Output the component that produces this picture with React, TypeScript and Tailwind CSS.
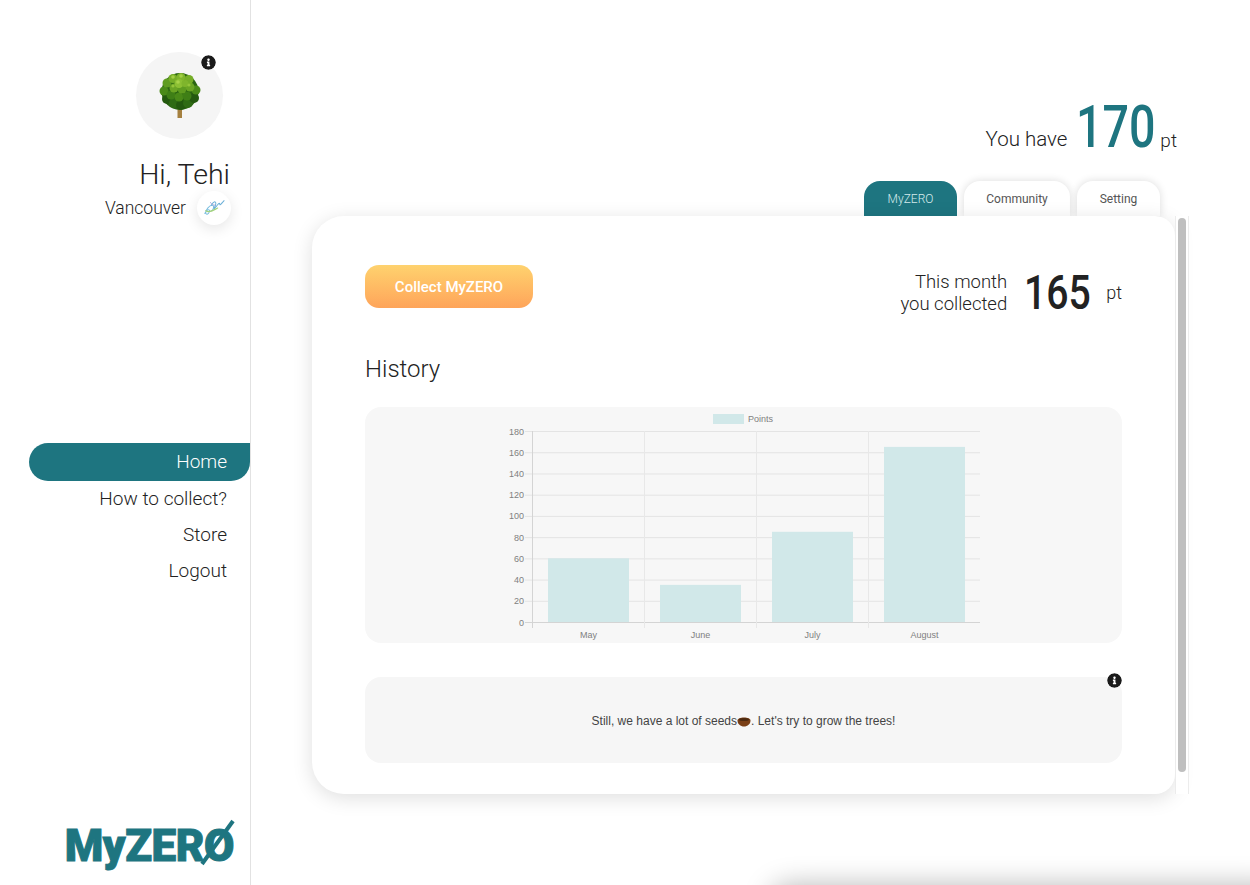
import { FaInfoCircle } from 'react-icons/fa'

const TEAL = '#1e7580'

const yTicks = [0, 20, 40, 60, 80, 100, 120, 140, 160, 180]
const months = [
  { label: 'May', value: 60, x: 183 },
  { label: 'June', value: 35, x: 295 },
  { label: 'July', value: 85, x: 407 },
  { label: 'August', value: 165, x: 519 },
]

// crown clumps of the tree, back to front: [cx, cy, r, colour]
const clumps: [number, number, number, string][] = [
  [21, 18.5, 18.5, '#2a6411'],
  [8, 26, 5, '#24590f'], [15, 30, 5, '#2f6b14'], [22, 32, 5, '#24590f'], [29, 30, 5, '#2f6b14'], [35, 25, 5, '#24590f'],
  [5, 18, 4.5, '#4a8a18'], [12, 22, 4.5, '#3f7f16'], [20, 24, 4.5, '#4a8a18'], [28, 23, 4.5, '#3f7f16'], [37, 17, 4.5, '#4a8a18'],
  [8, 10, 4.5, '#5f9c20'], [15, 15, 4.5, '#6ba524'], [23, 16, 4.5, '#5f9c20'], [31, 14, 4.5, '#6ba524'],
  [14, 5.5, 4.5, '#76ae28'], [22, 4.5, 4.5, '#7fb52c'], [30, 6.5, 4.5, '#76ae28'], [20, 10.5, 4.5, '#8cc034'], [26, 10.5, 3.5, '#7fb52c'],
  [14, 4, 1.8, '#a3cf45'], [22, 3, 1.8, '#a3cf45'], [19, 9, 1.8, '#a8d34a'], [30, 12, 1.6, '#94c53a'], [14, 13, 1.6, '#94c53a'],
]

function TreeIcon() {
  return (
    <svg width="42" height="46" viewBox="0 0 42 46">
      <rect x="18.5" y="34" width="4.5" height="11" fill="#a5803f" />
      {clumps.map(([cx, cy, r, fill], i) => (
        <circle key={i} cx={cx} cy={cy} r={r} fill={fill} />
      ))}
    </svg>
  )
}

function CityIcon() {
  return (
    <svg width="22" height="20" viewBox="0 0 24 20" fill="none" strokeLinecap="round">
      <path d="M2 16c2-5 6-5 5-2s-4 4-4 1 4-8 7-8 1 6-1 6" stroke="#7cbfe0" strokeWidth="1.1" />
      <path d="M9 7c2-4 5-5 5-2s-3 6-2 6 5-7 6-6-1 4 5-3" stroke="#6cb0d8" strokeWidth="1.1" />
      <path d="M3 13c4 3 9-1 13-3" stroke="#a3d27c" strokeWidth="1.3" />
      <path d="M8 4c2 2 3 3 5 3" stroke="#a9a2d8" strokeWidth="1" />
    </svg>
  )
}

function SeedIcon() {
  return (
    <svg className="inline-block align-[-2px]" width="14" height="10" viewBox="0 0 14 10">
      <path d="M0.5 3.5C0.5 1.5 3.5 0.5 7 0.5s6.5 1 6.5 3C13.5 7 10.5 9.5 7 9.5S0.5 7 0.5 3.5z" fill="#7a3f16" />
      <ellipse cx="7" cy="2.6" rx="5" ry="1.5" fill="#4d2a10" />
    </svg>
  )
}

function HistoryChart() {
  return (
    <svg width="757" height="236" viewBox="0 0 757 236" fontFamily="'Liberation Sans', sans-serif" fontSize="9" fill="#808080">
      <rect x="348" y="7" width="31" height="10" fill="#d1e8e9" />
      <text x="383" y="15">Points</text>
      {yTicks.map((t) => {
        const y = 215.5 - t * 1.0611
        return (
          <g key={t}>
            <line x1="160" x2="615" y1={y} y2={y} stroke={t === 0 ? '#d4d4d4' : '#e4e4e4'} />
            <text x="159" y={y + 3} textAnchor="end">{t}</text>
          </g>
        )
      })}
      {[167, 279, 391, 503].map((x, i) => (
        <line key={x} x1={x + 0.5} x2={x + 0.5} y1="24" y2="221" stroke={i === 0 ? '#d4d4d4' : '#e8e8e8'} />
      ))}
      {months.map((m) => (
        <g key={m.label}>
          <rect x={m.x} y={215 - m.value * 1.0611} width="81" height={m.value * 1.0611} fill="#d1e8e9" />
          <text x={m.x + 40.5} y="231" textAnchor="middle">{m.label}</text>
        </g>
      ))}
    </svg>
  )
}

export default function App() {
  return (
    <div className="relative flex h-[885px] w-[1250px] overflow-hidden bg-white text-[#222] font-['Roboto','Liberation_Sans',sans-serif] font-light">

      {/* Sidebar */}
      <aside className="flex w-[251px] shrink-0 flex-col items-end border-r border-[#e2e2e2] pt-[52px]">
        <div className="relative mr-[27px] flex h-[87px] w-[87px] items-center justify-center rounded-full bg-[#f5f5f5]">
          <TreeIcon />
          <FaInfoCircle className="absolute right-[7px] top-[3px] rounded-full bg-white text-[#1a1a1a]" size={15} />
        </div>
        <p className="mr-[20px] mt-[19px] text-[28.5px] leading-[34px]">Hi, Tehi</p>
        <div className="mr-[19px] mt-[-1px] flex items-center gap-[11px]">
          <span className="text-[17.5px]">Vancouver</span>
          <div className="flex h-[34px] w-[34px] items-center justify-center rounded-full bg-white shadow-[0_4px_14px_rgba(0,0,0,0.1)]">
            <CityIcon />
          </div>
        </div>

        <nav className="mt-[218px] flex w-[221px] flex-col text-right text-[19px]">
          <a className="flex h-[38px] items-center justify-end rounded-l-[19px] rounded-br-[19px] pr-[23px] text-white bg-[#1e7580]">Home</a>
          <a className="flex h-[36px] items-center justify-end pr-[23px]">How to collect?</a>
          <a className="flex h-[36px] items-center justify-end pr-[23px]">Store</a>
          <a className="flex h-[36px] items-center justify-end pr-[23px]">Logout</a>
        </nav>

        <div className="relative mb-[15px] mr-[16px] mt-auto font-['Roboto',sans-serif] text-[44px] font-black leading-[48px] tracking-[-0.01em] text-[#1e7580] [-webkit-text-stroke:1px_#1e7580]">
          MyZERO
          <svg className="absolute right-[-1px] top-[-3px]" width="36" height="48" viewBox="0 0 36 48">
            <line x1="34" y1="2" x2="3" y2="45" stroke={TEAL} strokeWidth="4" />
          </svg>
        </div>
      </aside>

      {/* Main */}
      <main className="flex flex-1 flex-col pl-[61px]">
        <div className="mr-[73px] mt-[95px] flex h-[64px] items-end justify-end">
          <span className="mb-[4px] text-[20.5px]">You have</span>
          <span className="ml-[9px] w-[78px] origin-left scale-x-[.79] font-['Roboto',sans-serif] text-[59px] font-medium leading-[64px] text-[#1e7580]">170</span>
          <span className="mb-[4px] ml-[6px] text-[19px]">pt</span>
        </div>

        <div className="mr-[90px] mt-[22px] flex h-[35px] justify-end gap-[7px] text-[12px] font-normal">
          <div className="flex w-[93px] items-center justify-center rounded-t-[16px] bg-[#1e7580] font-light text-[#d5ebec]">MyZERO</div>
          <div className="flex w-[106px] items-center justify-center rounded-t-[16px] bg-white text-[#555] shadow-[0_0_8px_rgba(0,0,0,0.14)]">Community</div>
          <div className="flex w-[83px] items-center justify-center rounded-t-[16px] bg-white text-[#555] shadow-[0_0_8px_rgba(0,0,0,0.14)]">Setting</div>
        </div>

        <div className="flex">
          <section className="relative h-[578px] w-[863px] rounded-[32px] rounded-br-[20px] rounded-tr-[20px] bg-white px-[53px] pt-[49px] shadow-[0_4px_20px_rgba(0,0,0,0.13)]">
            <div className="flex h-[43px] items-start justify-between">
              <button className="h-[43px] w-[168px] rounded-[14px] bg-gradient-to-b from-[#fed26e] to-[#fea45a] pt-[2px] font-['Roboto',sans-serif] text-[15px] font-medium text-white">
                Collect MyZERO
              </button>
              <div className="flex items-center">
                <p className="text-right text-[18.5px] leading-[22px]">This month<br />you collected</p>
                <span className="ml-[17px] w-[66px] origin-left scale-x-[.8] font-['Roboto',sans-serif] text-[49px] font-medium leading-[56px]">165</span>
                <span className="mb-[2px] ml-[16px] text-[18px]">pt</span>
              </div>
            </div>

            <h2 className="mt-[46px] text-[24px] leading-[30px]">History</h2>

            <div className="mt-[23px] h-[236px] rounded-[16px] bg-[#f7f7f7]">
              <HistoryChart />
            </div>

            <div className="relative mt-[34px] flex h-[86px] items-center justify-center rounded-[16px] bg-[#f6f6f6] pt-[2px] font-['Liberation_Sans',sans-serif] text-[12px] font-normal text-[#444]">
              <p>Still, we have a lot of seeds<SeedIcon />. Let&apos;s try to grow the trees!</p>
              <FaInfoCircle className="absolute right-0 top-[-4px] rounded-full bg-white text-[#1a1a1a]" size={15} />
            </div>
          </section>

          {/* Scrollbar */}
          <div className="relative z-10 h-[578px] w-[14px] border-x border-[#ececec] bg-white pl-[2px] pt-[2px]">
            <div className="h-[554px] w-[8px] rounded-full bg-[#bfbfbf]" />
          </div>
        </div>
      </main>

      {/* Edge of the panel sitting below the fold */}
      <div className="absolute left-[770px] top-[885px] h-[40px] w-[520px] rounded-[24px] bg-white shadow-[0_0_28px_rgba(0,0,0,0.28)]" />
    </div>
  )
}
